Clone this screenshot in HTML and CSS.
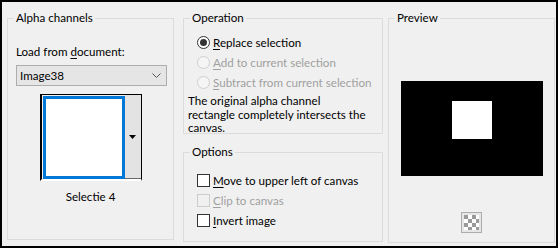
FILE: index.html
```html
<!DOCTYPE html>
<html>
<head>
<meta charset="utf-8">
<link rel="stylesheet" href="styles.css">
</head>
<body>
<div class="dialog">
  <fieldset class="group col1">
    <legend>Alpha channels</legend>
    <div class="label">Load from <u>d</u>ocument:</div>
    <div class="combo">
      <span>Image38</span>
      <svg class="chev" width="9" height="5" viewBox="0 0 9 5"><polyline points="0.5,0.5 4.5,4.5 8.5,0.5" fill="none" stroke="#555" stroke-width="1"/></svg>
    </div>
    <div class="thumb">
      <div class="swatch"></div>
      <div class="drop"><svg width="7" height="4" viewBox="0 0 7 4"><polygon points="0,0 7,0 3.5,4" fill="#000"/></svg></div>
    </div>
    <div class="caption">Selectie 4</div>
  </fieldset>
  <div class="col2">
    <fieldset class="group op">
      <legend>Operation</legend>
      <div class="opt"><span class="radio on"></span><span><u>R</u>eplace selection</span></div>
      <div class="opt dis"><span class="radio"></span><span><u>A</u>dd to current selection</span></div>
      <div class="opt dis"><span class="radio"></span><span><u>S</u>ubtract from current selection</span></div>
      <p class="note">The original alpha channel<br>rectangle completely intersects the<br>canvas.</p>
    </fieldset>
    <fieldset class="group opts">
      <legend>Options</legend>
      <div class="opt first"><span class="check"></span><span><u>M</u>ove to upper left of canvas</span></div>
      <div class="opt dis"><span class="check"></span><span><u>C</u>lip to canvas</span></div>
      <div class="opt"><span class="check"></span><span><u>I</u>nvert image</span></div>
    </fieldset>
  </div>
  <fieldset class="group col3">
    <legend>Preview</legend>
    <div class="preview"><div class="sel"></div></div>
    <div class="trans">
      <svg width="21" height="21" viewBox="0 0 21 21">
        <rect x="0.5" y="0.5" width="20" height="20" fill="#e6e6e6" stroke="#adadad"/>
        <rect x="3" y="3" width="15" height="15" fill="#fff"/>
        <g fill="#9a9a9a">
          <rect x="3" y="3" width="4" height="4"/><rect x="11" y="3" width="4" height="4"/>
          <rect x="7" y="7" width="4" height="4"/><rect x="15" y="7" width="3" height="4"/>
          <rect x="3" y="11" width="4" height="4"/><rect x="11" y="11" width="4" height="4"/>
          <rect x="7" y="15" width="4" height="3"/><rect x="15" y="15" width="3" height="3"/>
        </g>
      </svg>
    </div>
  </fieldset>
</div>
</body>
</html>
```
FILE: styles.css
```css
html, body {
  margin: 0;
  padding: 0;
  background: #fff;
}
body {
  font-family: Lato, "Noto Sans", sans-serif;
  font-size: 11.6px;
  color: #000;
}
.dialog {
  box-sizing: border-box;
  width: 558px;
  height: 248px;
  border: 2px solid #000;
  background: #f0f0f0;
  display: flex;
  align-items: flex-start;
  padding: 8px 0 0 5px;
}
.group {
  margin: 0;
  padding: 0;
  border: 1px solid #dcdcdc;
  min-inline-size: 0;
  box-sizing: border-box;
}
.group legend {
  margin-left: 6px;
  padding: 0 2px;
  line-height: 16px;
  height: 16px;
}
.col1 {
  width: 167px;
  height: 230px;
}
.label {
  margin: 18px 0 0 8px;
  line-height: 16px;
}
.label u, .opt u { text-decoration: underline; text-underline-offset: 2px; }
.combo {
  margin: 5px 0 0 8px;
  width: 151px;
  height: 21px;
  box-sizing: border-box;
  border: 1px solid #adadad;
  background: #e5e5e5;
  display: flex;
  align-items: center;
  justify-content: space-between;
  padding: 0 5px 0 3px;
  line-height: 16px;
}
.chev { display: block; }
.thumb {
  margin: 8px 0 0 32px;
  width: 102px;
  box-sizing: border-box;
  display: flex;
  border-left: 2px solid #000;
  border-top: 1px solid #000;
  border-right: 1px solid #000;
  border-bottom: 2px solid #fff;
  padding-left: 1px;
}
.swatch {
  width: 82px;
  height: 83px;
  box-sizing: border-box;
  border: 3px solid #0078d7;
  background: #fff;
  margin-top: 1px;
}
.drop {
  width: 16px;
  background: #e3e3e3;
  border-bottom: 1px solid #6a6a6a;
  display: flex;
  align-items: center;
  justify-content: center;
}
.drop svg { display: block; margin-right: 1px; }
.caption {
  margin-top: 8px;
  text-align: center;
  line-height: 16px;
}
.col2 {
  margin-left: 9px;
  width: 200px;
  display: flex;
  flex-direction: column;
  gap: 10px;
}
.op {
  height: 124px;
}
.opts {
  height: 98px;
}
.opt {
  display: flex;
  align-items: center;
  height: 20px;
  padding-left: 13px;
  gap: 3px;
  white-space: nowrap;
}
.op .opt:first-of-type { margin-top: 6px; }
.opts .opt.first { margin-top: 10px; }
.opt.dis { color: #a0a0a0; }
.radio {
  width: 13px;
  height: 13px;
  box-sizing: border-box;
  border: 1px solid #333;
  border-radius: 50%;
  background: #fff;
  display: flex;
  align-items: center;
  justify-content: center;
  flex: none;
}
.radio.on::after {
  content: "";
  width: 7px;
  height: 7px;
  border-radius: 50%;
  background: #333;
}
.dis .radio {
  border-color: #cfcfcf;
  background: #f5f5f5;
}
.check {
  width: 13px;
  height: 13px;
  box-sizing: border-box;
  border: 1px solid #333;
  background: #fff;
  flex: none;
}
.dis .check {
  border-color: #cccccc;
  background: #f0f0f0;
}
.note {
  margin: 2px 0 0 4px;
  line-height: 13.5px;
  white-space: nowrap;
}
.col3 {
  margin-left: 5px;
  width: 167px;
  height: 233px;
  display: flex;
  flex-direction: column;
  align-items: center;
}
.preview {
  margin-top: 55px;
  width: 142px;
  height: 95px;
  background: #000;
  display: flex;
  justify-content: center;
  padding-top: 20px;
  box-sizing: border-box;
}
.sel {
  width: 40px;
  height: 38px;
  background: #fff;
  margin-left: 1px;
}
.trans {
  margin-top: 36px;
  line-height: 0;
}
```
